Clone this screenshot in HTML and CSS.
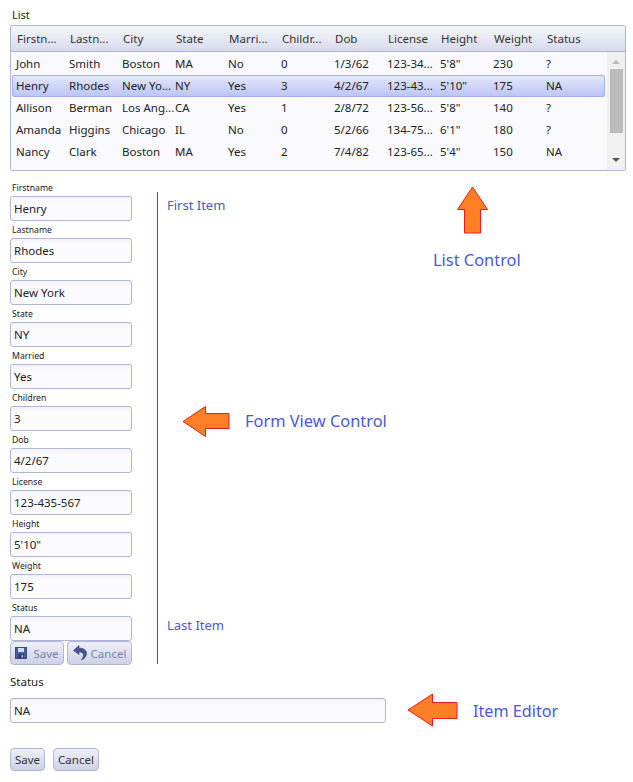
FILE: index.html
```html
<!DOCTYPE html>
<html lang="en">
<head>
    <meta charset="UTF-8">
    <meta name="viewport" content="width=device-width, initial-scale=1.0">
    <title>Form View Control</title>
    <link rel="stylesheet" href="styles.css">
</head>
<body>
    <!-- List control -->
    <div class="list-title">List</div>
    <div class="list">
        <div class="row list-head">
            <span>Firstn...</span><span>Lastn...</span><span>City</span><span>State</span><span>Marri...</span><span>Childr...</span><span>Dob</span><span>License</span><span>Height</span><span>Weight</span><span>Status</span>
        </div>
        <div class="list-body">
            <div class="rows">
                <div class="row">
                    <span>John</span><span>Smith</span><span>Boston</span><span>MA</span><span>No</span><span>0</span><span>1/3/62</span><span>123-34...</span><span>5'8"</span><span>230</span><span>?</span>
                </div>
                <div class="row selected">
                    <span>Henry</span><span>Rhodes</span><span>New Yo...</span><span>NY</span><span>Yes</span><span>3</span><span>4/2/67</span><span>123-43...</span><span>5'10"</span><span>175</span><span>NA</span>
                </div>
                <div class="row">
                    <span>Allison</span><span>Berman</span><span>Los Ang...</span><span>CA</span><span>Yes</span><span>1</span><span>2/8/72</span><span>123-56...</span><span>5'8"</span><span>140</span><span>?</span>
                </div>
                <div class="row">
                    <span>Amanda</span><span>Higgins</span><span>Chicago</span><span>IL</span><span>No</span><span>0</span><span>5/2/66</span><span>134-75...</span><span>6'1"</span><span>180</span><span>?</span>
                </div>
                <div class="row">
                    <span>Nancy</span><span>Clark</span><span>Boston</span><span>MA</span><span>Yes</span><span>2</span><span>7/4/82</span><span>123-65...</span><span>5'4"</span><span>150</span><span>NA</span>
                </div>
                <div class="row">
                    <span>Rick</span><span>Doyle</span><span>Seattle</span><span>WA</span><span>No</span><span>1</span><span>6/9/70</span><span>123-78...</span><span>5'9"</span><span>165</span><span>?</span>
                </div>
            </div>
            <div class="scrollbar">
                <div class="scroll-up"></div>
                <div class="scroll-thumb"></div>
                <div class="scroll-down"></div>
            </div>
        </div>
    </div>

    <div class="main">
        <!-- Form view -->
        <div class="form">
            <label class="field-label">Firstname</label>
            <div class="input">Henry</div>
            <label class="field-label">Lastname</label>
            <div class="input">Rhodes</div>
            <label class="field-label">City</label>
            <div class="input">New York</div>
            <label class="field-label">State</label>
            <div class="input">NY</div>
            <label class="field-label">Married</label>
            <div class="input">Yes</div>
            <label class="field-label">Children</label>
            <div class="input">3</div>
            <label class="field-label">Dob</label>
            <div class="input">4/2/67</div>
            <label class="field-label">License</label>
            <div class="input">123-435-567</div>
            <label class="field-label">Height</label>
            <div class="input">5'10"</div>
            <label class="field-label">Weight</label>
            <div class="input">175</div>
            <label class="field-label">Status</label>
            <div class="input">NA</div>
            <div class="form-buttons">
                <button class="btn btn-disabled btn-save">
                    <svg width="12" height="12" viewBox="0 0 12 12">
                        <rect x="0.5" y="0.5" width="11" height="11" fill="#4a5c9e" stroke="#39487f"/>
                        <rect x="3" y="1" width="6" height="4" fill="#d5daee"/>
                        <rect x="3" y="7" width="6" height="4" fill="#2f3c70"/>
                        <rect x="6.5" y="8" width="1.5" height="2.5" fill="#c4cae4"/>
                    </svg>
                    Save
                </button>
                <button class="btn btn-disabled btn-cancel">
                    <svg width="14" height="16" viewBox="0 0 14 16">
                        <path d="M6 0.5 L0.5 5.5 L6 9.5 L6 7 C9 6.8 10.6 8.2 10.4 10.4 C10.3 12 9.4 13.4 8.4 15 C11.4 13.8 13.5 11.4 13.5 8.4 C13.5 5 10.4 3 6 3.2 Z" fill="#43548f" stroke="#33427a" stroke-width="0.6"/>
                    </svg>
                    Cancel
                </button>
            </div>
        </div>

        <div class="divider"></div>

        <div class="panel">
            <div class="panel-top">
                <div class="item-text first-item">First Item</div>
                <div class="callout-list">
                    <svg class="arrow-up" width="33" height="48" viewBox="0 0 33 48">
                        <path d="M16.5 1 L1.5 23.5 L8.5 23.5 L8.5 47 L24.5 47 L24.5 23.5 L31.5 23.5 Z" fill="#ff7f27" stroke="#ed1c24"/>
                    </svg>
                    <div class="callout-text">List Control</div>
                </div>
            </div>
            <div class="callout-form">
                <svg width="49" height="33" viewBox="0 0 49 33">
                    <path d="M1 16.5 L23.5 1.5 L23.5 8.5 L47 8.5 L47 23.5 L23.5 23.5 L23.5 31.5 Z" fill="#ff7f27" stroke="#ed1c24"/>
                </svg>
                <div class="callout-text">Form View Control</div>
            </div>
            <div class="item-text last-item">Last Item</div>
        </div>
    </div>

    <!-- Item editor -->
    <div class="editor-label">Status</div>
    <div class="editor-row">
        <div class="input editor-input">NA</div>
        <svg width="51" height="34" viewBox="0 0 51 34">
            <path d="M1 17 L25.5 1 L25.5 9.5 L50 9.5 L50 25.5 L25.5 25.5 L25.5 33 Z" fill="#ff7f27" stroke="#ed1c24"/>
        </svg>
        <div class="callout-text">Item Editor</div>
    </div>
    <div class="editor-buttons">
        <button class="btn btn-small">Save</button>
        <button class="btn btn-small btn-wide">Cancel</button>
    </div>
</body>
</html>
```

FILE: styles.css
```css
body {
    margin: 0;
    padding: 8px 0 0 10px;
    background: #fff;
    font-family: "Noto Sans", sans-serif;
    font-size: 11.5px;
    color: #222;
}

.list-title {
    height: 17px;
    line-height: 14px;
    padding-left: 2px;
    font-size: 11px;
}

/* List control */
.list {
    width: 616px;
    height: 146px;
    box-sizing: border-box;
    border: 1px solid #b1b6d8;
    border-radius: 2px;
    background: #fafafe;
    overflow: hidden;
}

.row {
    display: grid;
    grid-template-columns: repeat(11, 53px);
    align-items: center;
    height: 22px;
    box-sizing: border-box;
    padding: 0 0 1px 4px;
    white-space: nowrap;
}

.list-head {
    height: 26px;
    padding: 0 0 0 6px;
    background: linear-gradient(#f5f6fb, #d7daea);
    border-bottom: 1px solid #aeb4d6;
    color: #333;
}

.list-body {
    display: flex;
    height: 118px;
}

.rows {
    flex: 1;
    padding: 1px 1px 0 1px;
    overflow: hidden;
}

.selected {
    border: 1px solid #a3b0ef;
    border-radius: 2px;
    padding: 0 0 1px 3px;
    background: linear-gradient(#e2e6fb, #bcc5f4);
}

.scrollbar {
    width: 18px;
    margin-left: 1px;
    background: #f0f0f0;
    display: flex;
    flex-direction: column;
    align-items: center;
}

.scroll-up {
    margin-top: 8px;
    border-left: 4px solid transparent;
    border-right: 4px solid transparent;
    border-bottom: 4px solid #b5b5b5;
}

.scroll-thumb {
    width: 13px;
    height: 64px;
    margin-top: 5px;
    background: #bcbcbc;
}

.scroll-down {
    margin-top: 25px;
    border-left: 4px solid transparent;
    border-right: 4px solid transparent;
    border-top: 4px solid #555;
}

/* Form view */
.main {
    display: flex;
    margin-top: 8px;
}

.form {
    width: 122px;
}

.field-label {
    display: block;
    height: 17px;
    line-height: 19px;
    padding-left: 2px;
    font-size: 8.7px;
}

.input {
    height: 25px;
    line-height: 23px;
    box-sizing: border-box;
    border: 1px solid #b1b6d8;
    border-radius: 3px;
    padding-left: 3px;
    background: linear-gradient(#f1f1f8 0, #fbfbfe 5px);
}

.form-buttons {
    display: flex;
    gap: 3px;
}

.btn {
    display: flex;
    align-items: center;
    justify-content: center;
    padding: 0;
    border: 1px solid #b1b6d8;
    border-radius: 4px;
    background: linear-gradient(#eef0f8, #cdd1e6);
    font-family: inherit;
    font-size: 11.5px;
    color: #333;
}

.btn-disabled {
    height: 24px;
    color: #7d82a6;
}

.btn-save {
    width: 54px;
    gap: 6px;
}

.btn-cancel {
    width: 65px;
    gap: 4px;
}

.divider {
    width: 1px;
    margin: 13px 0 1px 25px;
    background: #c8202c;
}

.panel {
    flex: 1;
    padding-left: 9px;
}

.panel-top {
    display: flex;
}

.item-text {
    height: 18px;
    line-height: 18px;
    font-size: 13px;
    color: #4a5ad0;
}

.first-item {
    width: 266px;
    margin-top: 17px;
}

.callout-list {
    display: flex;
    flex-direction: column;
    align-items: center;
    margin-top: 7px;
}

.arrow-up {
    margin-right: 8px;
}

.callout-text {
    font-size: 16.4px;
    line-height: 22px;
    color: #4a5ad0;
    white-space: nowrap;
}

.callout-list .callout-text {
    margin-top: 15px;
}

.callout-form {
    display: flex;
    align-items: center;
    gap: 14px;
    margin: 134px 0 0 15px;
}

.callout-form .callout-text {
    margin-bottom: 2px;
}

.last-item {
    margin-top: 178px;
}

/* Item editor */
.editor-label {
    height: 18px;
    line-height: 18px;
    margin-top: 8px;
    font-size: 11.5px;
}

.editor-row {
    display: flex;
    align-items: center;
    margin-top: 2px;
    gap: 21px;
}

.editor-input {
    width: 376px;
}

.editor-row .callout-text {
    margin: 2px 0 0 -6px;
    font-size: 16.2px;
}

.editor-buttons {
    display: flex;
    gap: 8px;
    margin-top: 21px;
}

.btn-small {
    width: 35px;
    height: 23px;
}

.btn-wide {
    width: 46px;
}
```
